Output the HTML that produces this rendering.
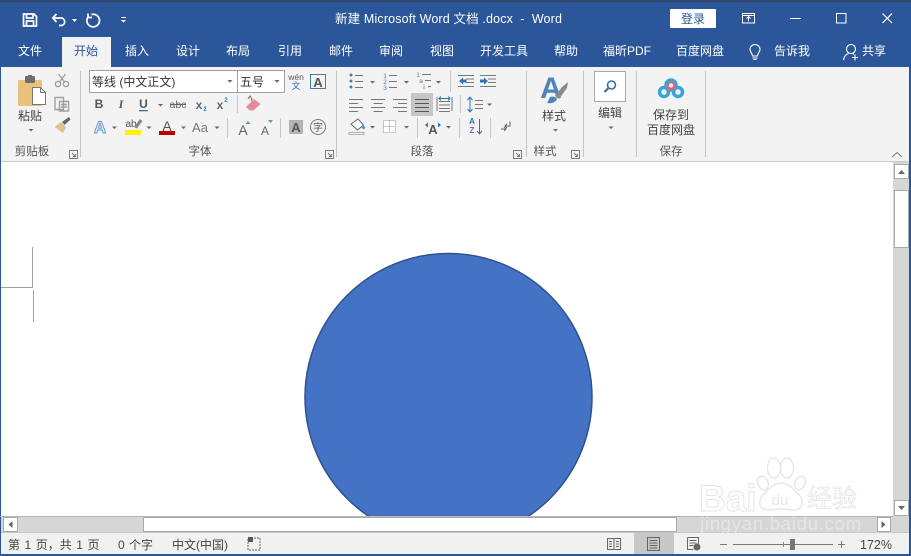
<!DOCTYPE html>
<html lang="zh"><head><meta charset="utf-8"><title>Word</title>
<style>
html,body{margin:0;padding:0;width:911px;height:556px;overflow:hidden;background:#fff}
svg{display:block}
text{font-family:"Liberation Sans","Noto Sans CJK SC",sans-serif;font-size:12px;fill:#444}
.t{fill:#fff;text-anchor:middle}
.m{text-anchor:middle}
.s{font-size:11.5px;fill:#555}
.tri{fill:#666}
.sep{stroke:#c6c6c6;stroke-width:1}
</style></head><body>
<svg width="911" height="556" viewBox="0 0 911 556" xmlns="http://www.w3.org/2000/svg">
<defs><clipPath id="doc"><rect x="0" y="162" width="893" height="354"/></clipPath></defs>
<rect width="911" height="556" fill="#fff"/>
<!-- title bar -->
<rect width="911" height="67" fill="#2b579a"/>
<rect width="911" height="2" fill="#33456a"/>
<rect x="0" y="67" width="911" height="95" fill="#f3f3f3"/>
<rect x="0" y="161" width="911" height="1" fill="#c9c9c9"/>
<!-- window edges -->
<rect x="0" y="67" width="1" height="489" fill="#2b579a"/>
<rect x="909" y="67" width="2" height="489" fill="#2b579a"/>
<!-- QAT -->
<g fill="none" stroke="#fff" stroke-width="1.7">
<path d="M23.500 14h10.500l2.500 2.500v9.500h-13z"/><path d="M26.500 26v-5h7v5M26.500 14v4h6.500v-4"/>
<path d="M53 18h8.500a3.800 3.800 0 0 1 0 7.500h-2.500M56.500 14l-3.700 4 3.700 4"/>
<path d="M91.500 14.500a6.300 6.300 0 1 1-3.500 2.500M88 13.500v4h4" />
</g>
<path d="M72 19h5l-2.500 3z" fill="#fff"/>
<path d="M121 17h5v1h-5zM121 20h5l-2.500 2.500z" fill="#fff"/>
<text x="335" y="23" fill="#fff" style="fill:#fff;font-size:12.500px;letter-spacing:.15px">新建 Microsoft Word 文档 .docx &#160;-&#160; Word</text>
<!-- title right -->
<rect x="670" y="9" width="46" height="19" rx="1" fill="#fff"/>
<text x="693" y="23" class="m" style="font-size:12px;fill:#2b579a">登录</text>
<g fill="none" stroke="#fff" stroke-width="1">
<rect x="742.500" y="13.500" width="12" height="9.500"/><path d="M742.500 15.500h12M748.500 21.500v-4.500M746.500 18.500l2-2 2 2"/>
<path d="M790 18.500h11"/><rect x="836.500" y="13.500" width="9.500" height="9.500"/>
<path d="M882.500 13.500l9.500 9.500M892 13.500l-9.500 9.500" stroke-width="1.200"/>
</g>
<!-- tabs -->
<rect x="62" y="37" width="49" height="30" fill="#f3f3f3"/>
<g style="font-size:12px">
<text x="30" y="55" class="t" style="fill:#fff">文件</text>
<text x="86" y="55" class="m" style="fill:#2b579a">开始</text>
<text x="137" y="55" class="t" style="fill:#fff">插入</text>
<text x="188" y="55" class="t" style="fill:#fff">设计</text>
<text x="238" y="55" class="t" style="fill:#fff">布局</text>
<text x="290" y="55" class="t" style="fill:#fff">引用</text>
<text x="341" y="55" class="t" style="fill:#fff">邮件</text>
<text x="391" y="55" class="t" style="fill:#fff">审阅</text>
<text x="442" y="55" class="t" style="fill:#fff">视图</text>
<text x="504" y="55" class="t" style="fill:#fff">开发工具</text>
<text x="566" y="55" class="t" style="fill:#fff">帮助</text>
<text x="627" y="55" class="t" style="fill:#fff">福昕PDF</text>
<text x="700" y="55" class="t" style="fill:#fff">百度网盘</text>
<text x="792" y="55" class="t" style="fill:#fff">告诉我</text>
<text x="874" y="55" class="t" style="fill:#fff">共享</text>
</g>
<g fill="none" stroke="#fff" stroke-width="1.100">
<path d="M752.500 56c0-3-2.500-3.500-2.500-6.500a5 5 0 0 1 10 0c0 3-2.500 3.500-2.500 6.500zM752.500 58h5M753.500 59.500h3"/>
<circle cx="851" cy="49" r="4.500"/><path d="M843.500 60c.5-4 3-6 5-6.500M853 53.500l1 1M852 57.500h6M855 54.500v6"/>
</g>
<!-- separators -->
<g class="sep">
<path d="M80.500 71v86M336.500 71v86M526.500 71v86M583.500 71v86M636.500 71v86M705.500 71v86"/>
<path d="M237.500 95v18M227.500 118v20M280.500 118v20M450.500 71v21M417.500 118v20M459.500 118v20M490.500 118v20M460.500 95v18"/>
</g>
<!-- clipboard -->
<rect x="18" y="80" width="24" height="26" rx="1.500" fill="#e9c37c"/>
<rect x="25" y="76" width="10" height="7" rx="1" fill="#6f6f6f"/><rect x="28" y="75" width="4" height="3" fill="#6f6f6f"/>
<path d="M32.500 87.500h8l5 5v12h-13z" fill="#fff" stroke="#777"/><path d="M40.500 87.500v5h5" fill="none" stroke="#777"/>
<text x="30" y="120" class="m">粘贴</text>
<path d="M28.500 129h5l-2.500 2.500z" class="tri"/>
<g fill="none" stroke="#a0a0a0" stroke-width="1.400">
<circle cx="58" cy="84" r="2.600"/><circle cx="66" cy="84" r="2.600"/><path d="M58.500 74l6 8M65.500 74l-6 8"/>
<path d="M55 97.500h8.500v12h-8.500zM59.500 101.500h9v9.500h-9z" fill="#f3f3f3"/><path d="M61 104.500h6M61 107h6"/>
</g>
<path d="M54.500 127l6.500-5 5 5.500-3 5.500z" fill="#e2c08a"/><path d="M62 122l7-5 1.500 2.500-6 5.500z" fill="#666"/>
<text x="32" y="155" class="m s" style="font-size:11.500px">剪贴板</text>
<g fill="none" stroke="#777" stroke-width=".9"><path d="M69.500 150.500h8v8h-8z"/><path d="M72 153l3.500 3.500M75.500 154v2.500h-2.500"/></g>
<!-- font -->
<rect x="89.500" y="70.500" width="148" height="22" fill="#fff" stroke="#a0a0a0"/>
<rect x="237.500" y="70.500" width="47" height="22" fill="#fff" stroke="#a0a0a0"/>
<text x="92" y="86" style="font-size:12px;fill:#333">等线 (中文正文)</text>
<text x="240" y="86" style="font-size:12px;fill:#333">五号</text>
<path d="M227.500 80h5l-2.500 2.800zM274.500 80h5l-2.500 2.800z" class="tri"/>
<text x="296" y="80" class="m" style="font-size:8.500px;fill:#555">wén</text>
<text x="296" y="89" class="m" style="font-size:9px;fill:#2e74b5">文</text>
<rect x="310.500" y="74.500" width="15" height="14" fill="#f3f3f3" stroke="#4d7ba6"/>
<text x="318" y="87" class="m" style="font-size:13px;font-weight:bold;fill:#555">A</text>
<g style="font-weight:bold">
<text x="99" y="108" class="m" style="font-size:12px;font-weight:bold;fill:#555">B</text>
<text x="121" y="108" class="m" style="font-size:12px;font-style:italic;font-family:'Liberation Serif',serif;font-weight:bold;fill:#555">I</text>
<text x="143.500" y="108" class="m" style="font-size:12px;font-weight:bold;fill:#555">U</text>
<rect x="139" y="110" width="9" height="1.300" fill="#2e74b5"/>
<text x="178" y="108" class="m" style="font-size:10.500px;font-weight:normal;fill:#666">abc</text>
<rect x="170" y="104" width="16" height="1" fill="#666"/>
<text x="199" y="109" class="m" style="font-size:12px;font-weight:bold;fill:#666">x</text>
<text x="205" y="111" class="m" style="font-size:6px;fill:#2e74b5">2</text>
<text x="220" y="109" class="m" style="font-size:12px;font-weight:bold;fill:#666">x</text>
<text x="226" y="102" class="m" style="font-size:6px;fill:#2e74b5">2</text>
</g>
<path d="M158 104h5l-2.500 2.500z" class="tri"/>
<path d="M246 107l8-8 6.500 5-7 6.500h-3.500z" fill="#e88a9b"/><path d="M248 99l2-3 2 3-1 2" fill="none" stroke="#666"/>
<!-- row 3 -->
<text x="100" y="133" class="m" style="font-size:17px;font-weight:bold;fill:#eaf2fa;stroke:#5c93c9;stroke-width:.9">A</text>
<path d="M112 126.500h5l-2.500 2.500zM146.500 126.500h5l-2.500 2.500zM181 126.500h5l-2.500 2.500zM214.500 126.500h5l-2.500 2.500z" class="tri"/>
<text x="131" y="127" class="m" style="font-size:10px;fill:#555">ab</text>
<path d="M134 127l6-8 2.500 2-5.500 7.500z" fill="#8a8a8a"/>
<rect x="125" y="130" width="16" height="5" fill="#fff200"/>
<text x="167" y="131" class="m" style="font-size:14px;fill:#555">A</text>
<rect x="159" y="131" width="16" height="4" fill="#c00000"/>
<text x="200" y="132" class="m" style="font-size:13px;fill:#777">Aa</text>
<text x="243" y="135" class="m" style="font-size:14px;fill:#666">A</text>
<path d="M245.500 124l2.500-3 2.500 3z" fill="#5c93c9"/>
<text x="265" y="135" class="m" style="font-size:12px;fill:#666">A</text>
<path d="M268 120h5l-2.500 3z" fill="#5c93c9"/>
<rect x="289" y="120" width="14" height="14" fill="#b4b4b4"/>
<text x="296" y="132" class="m" style="font-size:13px;font-weight:bold;fill:#555">A</text>
<circle cx="318" cy="127" r="7.500" fill="none" stroke="#777"/>
<text x="318" y="131" class="m" style="font-size:10px;fill:#555">字</text>
<text x="200" y="155" class="m s" style="font-size:11.500px">字体</text>
<g fill="none" stroke="#777" stroke-width=".9"><path d="M325.500 150.500h8v8h-8z"/><path d="M328 153l3.500 3.500M331.500 154v2.500h-2.500"/></g>
<!-- paragraph -->
<g fill="#4d7ba6"><circle cx="351" cy="75" r="1.500"/><circle cx="351" cy="81" r="1.500"/><circle cx="351" cy="87" r="1.500"/></g>
<path d="M355 75.500h8M355 81.500h8M355 87.500h8M389 75.500h8M389 81.500h8M389 87.500h8M422 74.500h9M425 80.500h6M428 86.500h3" stroke="#777" fill="none"/>
<g><text x="385" y="78" class="m" style="font-size:6.500px;fill:#4d7ba6">1</text><text x="385" y="84" class="m" style="font-size:6.500px;fill:#4d7ba6">2</text><text x="385" y="90" class="m" style="font-size:6.500px;fill:#4d7ba6">3</text>
<text x="418" y="77" class="m" style="font-size:6.500px;fill:#4d7ba6">1</text><text x="421" y="83" class="m" style="font-size:6.500px;fill:#4d7ba6">a</text><text x="424" y="89" class="m" style="font-size:6.500px;fill:#666">i</text></g>
<path d="M370 81h5l-2.500 2.500zM404 81h5l-2.500 2.500zM436 81h5l-2.500 2.500z" class="tri"/>
<g stroke="#777" fill="none"><path d="M458 75.500h16M466 79h8M466 82.500h8M458 86.500h16M480 75.500h16M488 79h8M488 82.500h8M480 86.500h16"/></g>
<path d="M459 81l4-3.500v2h3.500v3h-3.500v2zM488 81l-4-3.500v2h-4v3h4v2z" fill="#2e74b5"/>
<!-- align -->
<rect x="411" y="93" width="22" height="23" fill="#c6c6c6"/>
<g stroke="#777" fill="none"><path d="M349 99.500h14M349 103.500h9M349 107.500h14M349 111.500h9"/>
<path d="M371 99.500h14M373.500 103.500h9M371 107.500h14M373.500 111.500h9"/>
<path d="M393 99.500h14M398 103.500h9M393 107.500h14M398 111.500h9"/></g>
<path d="M415 99.500h14M415 103.500h14M415 107.500h14M415 111.500h14" stroke="#555" fill="none"/>
<path d="M437 97v14M452 97v14M439 101.500h11M439 105h11M439 108.500h11M439 111.500h11" stroke="#777" fill="none"/>
<path d="M439 98.500h11M441 96.500l-2 2 2 2M448 96.500l2 2-2 2" stroke="#2e74b5" fill="none"/>
<path d="M470 97.500v14M467.500 100l2.500-3 2.500 3M467.500 109l2.500 3 2.500-3" stroke="#2e74b5" fill="none"/>
<path d="M475 100.500h8M475 104.500h8M475 108.500h8" stroke="#777" fill="none"/>
<path d="M487 103.500h5l-2.500 2.500z" class="tri"/>
<!-- row3 para -->
<path d="M351 124l7-5 5.500 6-6 5z" fill="#fff" stroke="#666"/><path d="M363 124l2.500 4-2 1.500-2-2z" fill="#5c93c9"/>
<path d="M349 132.500h15v2h-15z" fill="#fff" stroke="#999" stroke-width=".8"/>
<path d="M370 126h5l-2.500 2.500zM404 126h5l-2.500 2.500zM446 126h5l-2.500 2.500z" class="tri"/>
<rect x="383.500" y="120.500" width="12" height="12" fill="#fff" stroke="#999" stroke-dasharray="1 1"/>
<path d="M389.500 120.500v12M383.500 126.500h12" stroke="#999" stroke-dasharray="1 1"/>
<text x="433" y="134" class="m" style="font-size:13px;font-weight:bold;fill:#555">A</text>
<path d="M425 125l3-2.500v5zM441 125l-3-2.500v5z" fill="#2e74b5"/>
<text x="472" y="124" class="m" style="font-size:8px;font-weight:bold;fill:#2e74b5">A</text>
<text x="472" y="133" class="m" style="font-size:8px;font-weight:bold;fill:#9a5ba8">Z</text>
<path d="M479.500 119v15M477 131l2.500 3 2.500-3" stroke="#666" fill="none"/>
<path d="M510 121.500v4.500h-5M507 124l-2 2 2 2M501 129h5M504 127l2 2-2 2" stroke="#666" fill="none"/>
<text x="422" y="155" class="m s" style="font-size:11.500px">段落</text>
<g fill="none" stroke="#777" stroke-width=".9"><path d="M513.500 150.500h8v8h-8z"/><path d="M516 153l3.500 3.500M519.500 154v2.500h-2.500"/></g>
<!-- styles -->
<text x="551" y="98" class="m" style="font-size:30px;font-weight:bold;fill:#4d86bd">A</text>
<path d="M555 96l7-9 6-5-1 6-8 11z" fill="#8a8a8a"/><path d="M550 97c3-1 6 0 7 2-1 3-5 5-10 4 1-1 2-4 3-6z" fill="#4d86bd"/>
<text x="554" y="120" class="m">样式</text>
<path d="M553 129h5l-2.500 2.500z" class="tri"/>
<text x="545" y="155" class="m s" style="font-size:11.500px">样式</text>
<g fill="none" stroke="#777" stroke-width=".9"><path d="M571.500 150.500h8v8h-8z"/><path d="M574 153l3.500 3.500M577.500 154v2.500h-2.500"/></g>
<!-- edit -->
<rect x="594.500" y="71.500" width="31" height="30" fill="#fff" stroke="#a8a8a8"/>
<circle cx="611.500" cy="85" r="4" fill="none" stroke="#3f6e9c" stroke-width="1.600"/><path d="M608.500 88l-4 4" stroke="#3f6e9c" stroke-width="2.200"/>
<text x="610" y="117" class="m">编辑</text>
<path d="M608.500 126.500h5l-2.500 2.500z" class="tri"/>
<!-- baidu save -->
<g fill="none" stroke-width="3.500">
<circle cx="664" cy="92" r="4.500" stroke="#3aa4d8"/><circle cx="678" cy="92" r="4.500" stroke="#3aa4d8"/><circle cx="671" cy="85" r="5" stroke="#3aa4d8"/>
</g>
<circle cx="671" cy="86" r="4.500" fill="#e5607a"/><circle cx="671" cy="85.500" r="2.200" fill="#f3f3f3"/>
<text x="671" y="119" class="m">保存到</text>
<text x="671" y="134" class="m">百度网盘</text>
<text x="671" y="155" class="m s" style="font-size:11.500px">保存</text>
<path d="M892 157l5-4.500 5 4.500" fill="none" stroke="#777"/>
<!-- document -->
<rect x="1" y="162" width="892" height="354" fill="#fff"/>
<g stroke="#9e9e9e" fill="none"><path d="M32.500 247v40.500H1M33.500 290v32"/></g>
<g clip-path="url(#doc)"><circle cx="448.500" cy="397" r="143.500" fill="#4472c4" stroke="#2f528f" stroke-width="1.500"/></g>
<!-- vertical scrollbar -->
<rect x="893" y="162" width="16" height="371" fill="#d6d6d6"/>
<rect x="894.500" y="164.500" width="14" height="14" fill="#fff" stroke="#aaa"/>
<path d="M898 174l3.500-4 3.500 4z" fill="#666"/>
<rect x="894.500" y="190.500" width="14" height="57" fill="#fff" stroke="#aaa"/>
<rect x="894.500" y="500.500" width="14" height="15" fill="#fff" stroke="#aaa"/>
<path d="M898 506l3.500 4 3.500-4z" fill="#666"/>
<!-- horizontal scrollbar -->
<rect x="1" y="516" width="892" height="17" fill="#d6d6d6"/>
<rect x="0" y="516" width="893" height="1" fill="#b5b5b5"/>
<rect x="3.500" y="517.500" width="14" height="14" fill="#fff" stroke="#aaa"/>
<path d="M12.500 521v7l-4-3.500z" fill="#666"/>
<rect x="143.500" y="517.500" width="533" height="14" fill="#fff" stroke="#aaa"/>
<rect x="877.500" y="517.500" width="13" height="14" fill="#fff" stroke="#aaa"/>
<path d="M881.500 521v7l4-3.500z" fill="#666"/>
<!-- status -->
<rect x="1" y="533" width="908" height="21" fill="#f1f1f1"/>
<rect x="1" y="532" width="908" height="1" fill="#c8c8c8"/>
<rect x="0" y="554" width="911" height="2" fill="#2b579a"/>
<text x="8" y="549" style="font-size:12px;word-spacing:1.200px;fill:#444">第 1 页，共 1 页</text>
<text x="118" y="549" style="font-size:12px;word-spacing:1px;fill:#444">0 个字</text>
<text x="172" y="549" style="font-size:12px;fill:#444">中文(中国)</text>
<rect x="248" y="538" width="12" height="12" fill="none" stroke="#666" stroke-dasharray="2 1"/><rect x="248" y="537" width="5" height="5" fill="#555"/>
<rect x="634" y="533" width="40" height="21" fill="#c8c8c8"/>
<g fill="none" stroke="#666"><path d="M607.500 538.500h6l.5 1 .5-1h6v11h-13zM614 539v10M609 541.500h3M609 544h3M609 546.500h3M616 541.500h3M616 544h3M616 546.500h3"/>
<rect x="647.500" y="537.500" width="12" height="13"/><path d="M649.500 540.500h8M649.500 543h8M649.500 545.500h8M649.500 548h8"/>
<path d="M687.500 537.500h11v9M687.500 537.500v12h6M689.500 540.500h7M689.500 543h7M689.500 545.500h4"/></g>
<circle cx="697" cy="547" r="3.500" fill="#666"/>
<path d="M720 544.500h7M733 544.500h100M838 544.500h7M841.500 541v7" stroke="#777" fill="none"/>
<path d="M783.500 542v5" stroke="#888"/>
<rect x="790" y="539" width="5" height="11" fill="#777"/>
<text x="860" y="549" style="font-size:12.500px;fill:#444">172%</text>
<!-- watermark -->
<g opacity=".8">
<g fill="none" stroke="#e2e2e2" stroke-width="1.500">
<ellipse cx="774" cy="468" rx="6.500" ry="10"/><ellipse cx="787" cy="468" rx="6.500" ry="10"/><ellipse cx="763" cy="483" rx="5" ry="7" transform="rotate(-25 763 483)"/><ellipse cx="800" cy="483" rx="5" ry="7" transform="rotate(25 800 483)"/>
<path d="M781 483c8 0 13 7 19 13 5 7 1 14-6 14-4 0-9-1-13-1s-9 1-13 1c-7 0-11-7-6-14 6-6 11-13 19-13z"/>
</g>
<text x="699" y="511" style="font-size:37px;font-weight:bold;fill:#fff;stroke:#e0e0e0;stroke-width:1">Bai</text>
<text x="780" y="505" class="m" style="font-size:15px;fill:#e0e0e0">du</text>
<text x="807" y="507" style="font-size:25px;fill:#fff;stroke:#e0e0e0;stroke-width:.8">经验</text>
<text x="700" y="530" style="font-size:18.500px;letter-spacing:.75px;fill:#e9e9e9">jingyan.baidu.com</text>
</g>
</svg>
</body></html>
